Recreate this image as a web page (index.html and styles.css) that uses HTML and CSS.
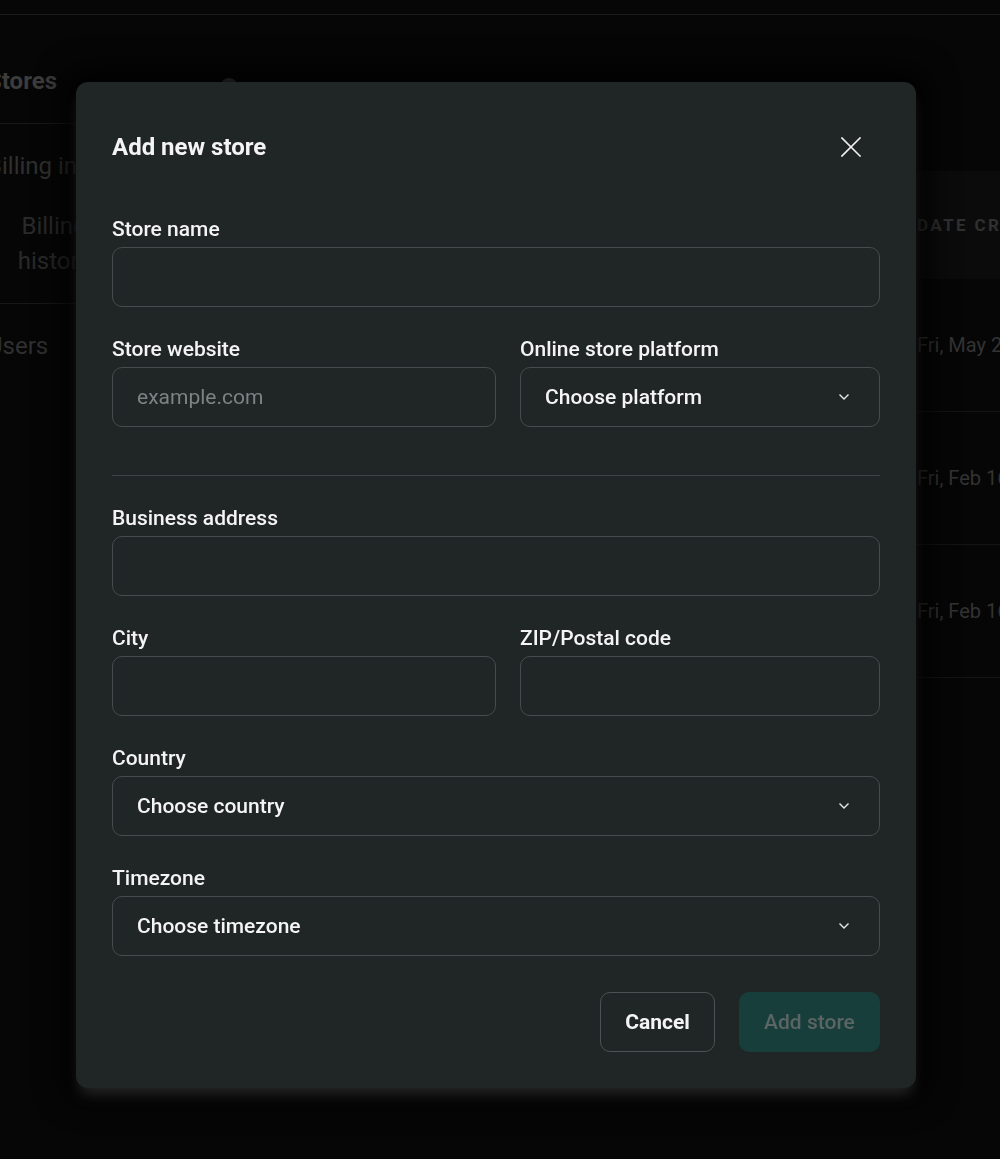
FILE: index.html
```html
<!DOCTYPE html>
<html lang="en">
<head>
    <meta charset="UTF-8">
    <meta name="viewport" content="width=device-width, initial-scale=1.0">
    <title>Add new store</title>
    <link rel="stylesheet" href="styles.css">
</head>
<body>
    <div class="page">
        <div class="topbar"></div>
        <div class="layout">
            <aside class="sidebar">
                <div class="side-block">
                    <div class="side-title">Stores</div>
                </div>
                <div class="side-block">
                    <div class="side-item">Billing info</div>
                    <div class="side-sub">Billing history</div>
                </div>
                <div class="side-block last">
                    <div class="side-item">Users</div>
                </div>
            </aside>

            <main class="main">
                <div class="help-dot"></div>
                <div class="table">
                    <div class="table-row table-head">
                        <div class="cell-name"></div>
                        <div class="cell-date">Date created</div>
                    </div>
                    <div class="table-row">
                        <div class="cell-name"></div>
                        <div class="cell-date">Fri, May 24, 2024</div>
                    </div>
                    <div class="table-row">
                        <div class="cell-name"></div>
                        <div class="cell-date">Fri, Feb 16, 2024</div>
                    </div>
                    <div class="table-row">
                        <div class="cell-name"></div>
                        <div class="cell-date">Fri, Feb 16, 2024</div>
                    </div>
                </div>
            </main>
        </div>
    </div>

    <div class="overlay">
        <div class="modal">
            <div class="modal-header">
                <div class="modal-title">Add new store</div>
                <button class="close-btn" aria-label="Close">
                    <svg width="20" height="20" viewBox="0 0 20 20" fill="none" stroke="#f2f2f2" stroke-width="1.6" stroke-linecap="square">
                        <path d="M1 1 L19 19 M19 1 L1 19"/>
                    </svg>
                </button>
            </div>

            <form class="form">
                <div class="field">
                    <label class="label">Store name</label>
                    <div class="input"></div>
                </div>

                <div class="field-row">
                    <div class="field">
                        <label class="label">Store website</label>
                        <div class="input placeholder">example.com</div>
                    </div>
                    <div class="field">
                        <label class="label">Online store platform</label>
                        <div class="input select">
                            <span>Choose platform</span>
                            <svg class="chevron" width="12" height="8" viewBox="0 0 12 8" fill="none" stroke="#e8e8e8" stroke-width="1.4">
                                <path d="M1.5 1.5 L6 6 L10.5 1.5"/>
                            </svg>
                        </div>
                    </div>
                </div>

                <div class="divider"></div>

                <div class="field">
                    <label class="label">Business address</label>
                    <div class="input"></div>
                </div>

                <div class="field-row">
                    <div class="field">
                        <label class="label">City</label>
                        <div class="input"></div>
                    </div>
                    <div class="field">
                        <label class="label">ZIP/Postal code</label>
                        <div class="input"></div>
                    </div>
                </div>

                <div class="field">
                    <label class="label">Country</label>
                    <div class="input select">
                        <span>Choose country</span>
                        <svg class="chevron" width="12" height="8" viewBox="0 0 12 8" fill="none" stroke="#e8e8e8" stroke-width="1.4">
                            <path d="M1.5 1.5 L6 6 L10.5 1.5"/>
                        </svg>
                    </div>
                </div>

                <div class="field">
                    <label class="label">Timezone</label>
                    <div class="input select">
                        <span>Choose timezone</span>
                        <svg class="chevron" width="12" height="8" viewBox="0 0 12 8" fill="none" stroke="#e8e8e8" stroke-width="1.4">
                            <path d="M1.5 1.5 L6 6 L10.5 1.5"/>
                        </svg>
                    </div>
                </div>

                <div class="actions">
                    <button type="button" class="btn btn-cancel">Cancel</button>
                    <button type="button" class="btn btn-submit" disabled>Add store</button>
                </div>
            </form>
        </div>
    </div>
</body>
</html>
```

FILE: styles.css
```css
:root {
    --page-bg: #060606;
    --dim-line: #181818;
    --dim-text: #303030;
    --modal-bg: #202526;
    --field-border: #464c4d;
    --white: #f4f4f4;
    --muted: #7c8383;
    --teal-dark: #173e3b;
}

* {
    margin: 0;
    padding: 0;
    box-sizing: border-box;
}

body {
    background: var(--page-bg);
    font-family: 'Roboto', 'Liberation Sans', sans-serif;
    width: 1000px;
    height: 1159px;
    overflow: hidden;
}

/* background page (dimmed behind the modal) */

.topbar {
    height: 15px;
    border-bottom: 1px solid #1c1c1c;
}

.layout {
    display: flex;
}

.sidebar {
    width: 213px;
    margin-left: -13px;
    flex-shrink: 0;
}

.side-block {
    padding: 51px 0 27px;
    border-bottom: 1px solid var(--dim-line);
}

.side-block + .side-block {
    padding-top: 27px;
    padding-bottom: 24px;
}

.side-block.last {
    border-bottom: none;
}

.side-title {
    font-size: 24px;
    line-height: 30px;
    font-weight: 700;
    color: #3c3c3c;
}

.side-item {
    font-size: 24px;
    line-height: 30px;
    color: var(--dim-text);
}

.side-sub {
    width: 134px;
    margin-top: 28px;
    padding: 0 26px;
    text-align: center;
    font-size: 24px;
    line-height: 35px;
    color: #2a2a2a;
}

.main {
    flex: 1;
    margin-right: -117px;
    padding-top: 63px;
}

.help-dot {
    width: 18px;
    height: 18px;
    margin-left: 20px;
    border-radius: 50%;
    background: #4a4a4a;
}

.table {
    margin-top: 75px;
}

.table-row {
    display: flex;
    height: 133px;
    align-items: center;
    border-bottom: 1px solid #141414;
}

.table-head {
    height: 108px;
    background: #0b0b0b;
    border-bottom: none;
}

.cell-name {
    flex: 1;
}

.cell-date {
    width: 200px;
    font-size: 20px;
    color: #333;
    white-space: nowrap;
}

.table-head .cell-date {
    font-size: 17px;
    font-weight: 700;
    letter-spacing: 2.4px;
    text-transform: uppercase;
    color: #303030;
}

/* modal */

.overlay {
    position: fixed;
    inset: 0;
    padding: 82px 0 0 76px;
}

.modal {
    width: 840px;
    background: var(--modal-bg);
    border-radius: 12px;
    padding: 36px;
    box-shadow: 0 10px 14px -4px rgba(70, 70, 70, 0.55), 0 0 30px 12px rgba(0, 0, 0, 0.9);
}

.modal-header {
    display: flex;
    align-items: center;
    justify-content: space-between;
    height: 58px;
    margin-bottom: 41px;
}

.modal-title {
    font-size: 24px;
    font-weight: 700;
    color: var(--white);
}

.close-btn {
    background: none;
    border: none;
    width: 40px;
    height: 40px;
    display: flex;
    align-items: center;
    justify-content: center;
    margin-right: 9px;
    cursor: pointer;
}

.form {
    display: flex;
    flex-direction: column;
    gap: 30px;
}

.field {
    display: flex;
    flex-direction: column;
    gap: 6px;
    min-width: 0;
}

.field-row {
    display: grid;
    grid-template-columns: 384px 1fr;
    gap: 24px;
}

.label {
    font-size: 21px;
    line-height: 24px;
    font-weight: 500;
    color: var(--white);
}

.input {
    height: 60px;
    border: 1px solid var(--field-border);
    border-radius: 10px;
    padding: 0 24px;
    display: flex;
    align-items: center;
    font-size: 21px;
    color: var(--white);
}

.input.placeholder {
    font-weight: 400;
    color: var(--muted);
}

.select {
    justify-content: space-between;
    font-weight: 500;
    padding-right: 29px;
}

.divider {
    height: 1px;
    margin-top: 18px;
    background: #3e4445;
}

.actions {
    display: flex;
    justify-content: flex-end;
    gap: 24px;
    margin-top: 6px;
}

.btn {
    height: 60px;
    border-radius: 10px;
    font-family: inherit;
    font-size: 21px;
    padding: 0;
}

.btn-cancel {
    background: transparent;
    border: 1px solid #4c5253;
    color: var(--white);
    font-weight: 700;
    width: 115px;
}

.btn-submit {
    background: var(--teal-dark);
    border: none;
    color: #5b6564;
    font-weight: 500;
    width: 141px;
}
```
